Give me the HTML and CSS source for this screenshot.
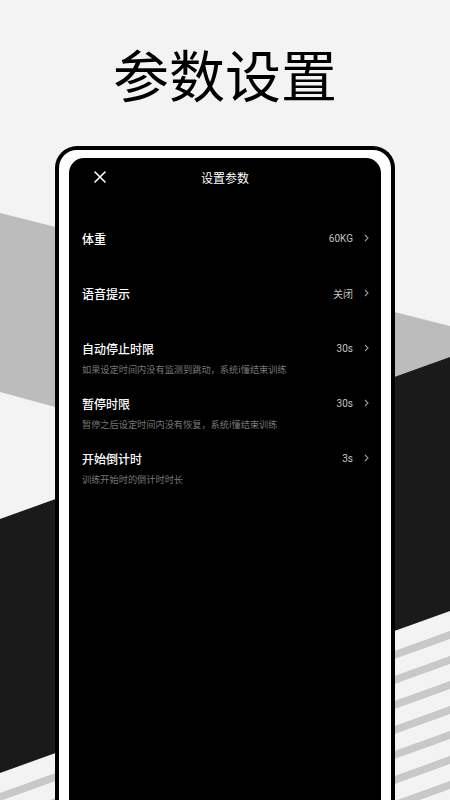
FILE: index.html
```html
<!DOCTYPE html>
<html lang="zh-CN">
<head>
    <meta charset="UTF-8">
    <meta name="viewport" content="width=device-width, initial-scale=1.0">
    <title>参数设置</title>
    <link rel="stylesheet" href="styles.css">
</head>
<body>
    <div class="page">
        <!-- paper backdrop with the diagonal bands -->
        <svg class="backdrop" viewBox="0 0 450 800" width="450" height="800">
            <rect width="450" height="800" fill="#f4f3f3"/>
            <polygon points="0,213 450,326 450,514 0,392" fill="#bcbcbc"/>
            <g stroke="#c8c8c8" stroke-width="7.5">
                <line x1="-10" y1="800.6" x2="460" y2="631.4"/>
                <line x1="-10" y1="825.6" x2="460" y2="656.4"/>
                <line x1="-10" y1="850.6" x2="460" y2="681.4"/>
                <line x1="-10" y1="875.6" x2="460" y2="706.4"/>
                <line x1="-10" y1="900.6" x2="460" y2="731.4"/>
                <line x1="-10" y1="925.6" x2="460" y2="756.4"/>
                <line x1="-10" y1="950.6" x2="460" y2="781.4"/>
                <line x1="-10" y1="975.6" x2="460" y2="806.4"/>
            </g>
            <polygon points="0,519 450,357 450,611 0,773" fill="#1a1a1a"/>
        </svg>

        <h1 class="headline">参数设置</h1>

        <div class="phone">
            <div class="screen">
                <div class="topbar">
                    <div class="topbar-left">
                        <svg class="close" width="12" height="12" viewBox="0 0 12 12">
                            <path d="M1 1 L11 11 M11 1 L1 11" stroke="#fff" stroke-width="1.6" fill="none" stroke-linecap="round"/>
                        </svg>
                    </div>
                    <span class="topbar-title">设置参数</span>
                    <div></div>
                </div>

                <ul class="settings">
                    <li class="row">
                        <div class="row-main">
                            <span class="row-title">体重</span>
                            <span class="row-value">60KG</span>
                            <svg class="chev" width="5" height="8" viewBox="0 0 5 8"><path d="M1 1 L4 4 L1 7" /></svg>
                        </div>
                    </li>
                    <li class="row">
                        <div class="row-main">
                            <span class="row-title">语音提示</span>
                            <span class="row-value">关闭</span>
                            <svg class="chev" width="5" height="8" viewBox="0 0 5 8"><path d="M1 1 L4 4 L1 7" /></svg>
                        </div>
                    </li>
                    <li class="row">
                        <div class="row-main">
                            <span class="row-title">自动停止时限</span>
                            <span class="row-value">30s</span>
                            <svg class="chev" width="5" height="8" viewBox="0 0 5 8"><path d="M1 1 L4 4 L1 7" /></svg>
                        </div>
                        <div class="row-sub">如果设定时间内没有监测到跳动，系统i懂结束训练</div>
                    </li>
                    <li class="row">
                        <div class="row-main">
                            <span class="row-title">暂停时限</span>
                            <span class="row-value">30s</span>
                            <svg class="chev" width="5" height="8" viewBox="0 0 5 8"><path d="M1 1 L4 4 L1 7" /></svg>
                        </div>
                        <div class="row-sub">暂停之后设定时间内没有恢复，系统i懂结束训练</div>
                    </li>
                    <li class="row">
                        <div class="row-main">
                            <span class="row-title">开始倒计时</span>
                            <span class="row-value">3s</span>
                            <svg class="chev" width="5" height="8" viewBox="0 0 5 8"><path d="M1 1 L4 4 L1 7" /></svg>
                        </div>
                        <div class="row-sub">训练开始时的倒计时时长</div>
                    </li>
                </ul>
            </div>
        </div>
    </div>
</body>
</html>
```

FILE: styles.css
```css
body {
    margin: 0;
    font-family: Roboto, "Noto Sans CJK SC", sans-serif;
    background: #f4f3f3;
}

.page {
    position: relative;
    width: 450px;
    height: 800px;
    overflow: hidden;
    display: flex;
    flex-direction: column;
    align-items: center;
}

.backdrop {
    position: absolute;
    left: 0;
    top: 0;
    z-index: 0;
}

.headline {
    position: relative;
    z-index: 1;
    margin: 45px 0 0;
    font-family: "Noto Sans CJK SC", sans-serif;
    font-size: 56px;
    line-height: 56px;
    font-weight: 400;
    color: #000;
}

.phone {
    position: relative;
    z-index: 1;
    flex: 1;
    width: 312px;
    margin-top: 45px;
    padding: 8px 10px 0;
    background: #fff;
    border: 4px solid #000;
    border-bottom: none;
    border-radius: 22px 22px 0 0;
    display: flex;
}

.screen {
    flex: 1;
    background: #000;
    border-radius: 15px 15px 0 0;
    color: #fff;
}

.topbar {
    display: grid;
    grid-template-columns: 1fr auto 1fr;
    align-items: center;
    height: 38px;
}

.topbar-left {
    padding-left: 25px;
    display: flex;
}

.topbar-title {
    font-family: "Noto Sans CJK SC", sans-serif;
    font-size: 12px;
    font-weight: 400;
}

.settings {
    list-style: none;
    margin: 0;
    padding: 33px 0 0;
}

.row {
    height: 55px;
    padding: 0 12px 0 13px;
}

.row-main {
    display: flex;
    align-items: center;
    height: 18px;
}

.row-title {
    flex: 1;
    font-family: "Noto Sans CJK SC", sans-serif;
    font-size: 12px;
    font-weight: 500;
    color: #fff;
}

.row-value {
    font-size: 10px;
    color: #c4c4c4;
}

.chev {
    margin-left: 11px;
}

.chev path {
    fill: none;
    stroke: #9a9a9a;
    stroke-width: 1.1;
}

.row-sub {
    margin-top: 5px;
    line-height: 14px;
    font-family: "Noto Sans CJK SC", sans-serif;
    font-size: 9.2px;
    color: #777;
}
```
